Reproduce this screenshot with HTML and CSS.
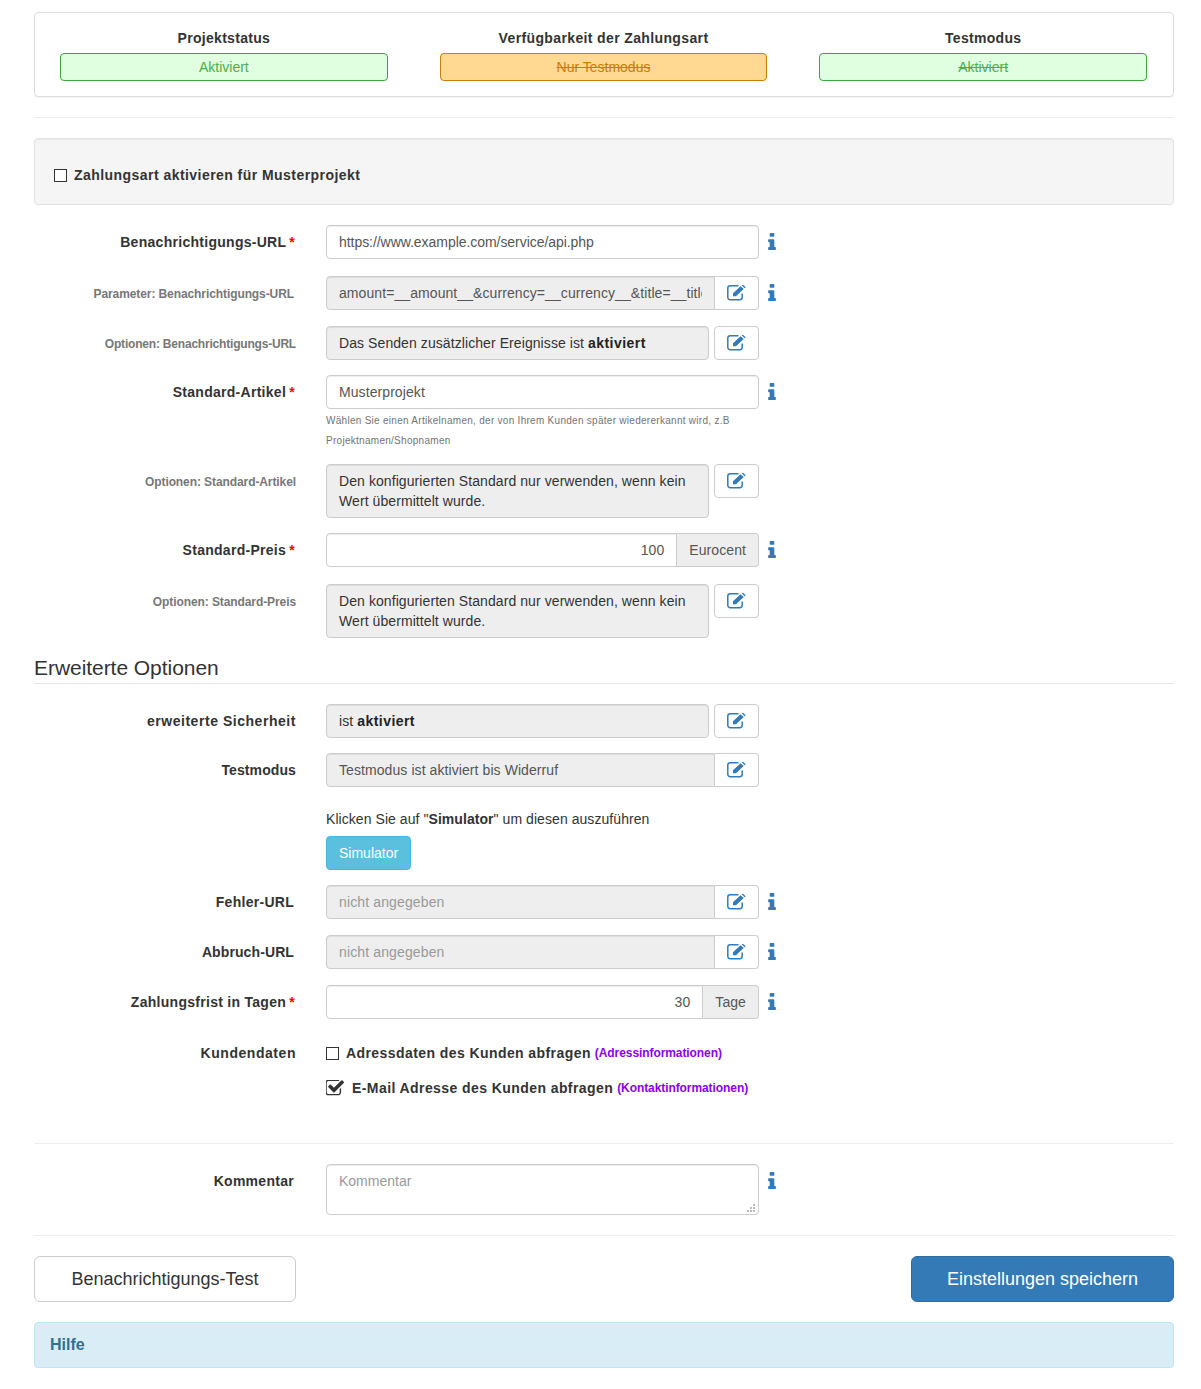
FILE: index.html
```html
<!DOCTYPE html>
<html lang="de">
<head>
<meta charset="utf-8">
<title>Zahlungsart</title>
<link rel="stylesheet" href="styles.css">
</head>
<body>
<svg class="defs" width="0" height="0" aria-hidden="true">
  <symbol id="i-edit" viewBox="0 0 20 16"><path class="edit-box" d="M11.500 .8H3.200A2.400 2.400 0 0 0 .8 3.200V12.300A2.400 2.400 0 0 0 3.200 14.700H12.800A2.400 2.400 0 0 0 15.200 12.300V8.500"/><path d="M6 8.300 13.600 1.200 16.700 4.100 9 11.300H6ZM14.600.3 15.200 0C15.700-.2 16.200 0 16.500.2L18.100 1.700C18.500 2.100 18.500 2.600 18.200 3L17.600 3.300Z"/></symbol>
  <symbol id="i-info" viewBox="576 128 640 1408"><path d="M1216 1344v128q0 26-19 45t-45 19h-512q-26 0-45-19t-19-45v-128q0-26 19-45t45-19h64v-384h-64q-26 0-45-19t-19-45v-128q0-26 19-45t45-19h384q26 0 45 19t19 45v576h64q26 0 45 19t19 45zm-128-1152v192q0 26-19 45t-45 19h-256q-26 0-45-19t-19-45v-192q0-26 19-45t45-19h256q26 0 45 19t19 45z"/></symbol>
  <symbol id="i-check" viewBox="128 230 1600 1306"><path d="M1472 930v318q0 119-84.500 203.500t-203.500 84.500h-832q-119 0-203.500-84.500t-84.500-203.500v-832q0-119 84.500-203.500t203.500-84.500h832q63 0 117 25 15 7 18 23 3 17-9 29l-49 49q-10 10-23 10-3 0-9-2-23-6-45-6h-832q-66 0-113 47t-47 113v832q0 66 47 113t113 47h832q66 0 113-47t47-113v-254q0-13 9-22l64-64q10-10 23-10 6 0 12 3 20 8 20 29zm231-489l-814 814q-24 24-57 24t-57-24l-430-430q-24-24-24-57t24-57l110-110q24-24 57-24t57 24l263 263 647-647q24-24 57-24t57 24l110 110q24 24 24 57t-24 57z"/></symbol>
</svg>

<main class="page">
  <section class="status-panel">
    <div class="status-col">
      <div class="status-title">Projektstatus</div>
      <div class="badge badge-green">Aktiviert</div>
    </div>
    <div class="status-col">
      <div class="status-title status-title-wide">Verfügbarkeit der Zahlungsart</div>
      <div class="badge badge-orange strike">Nur Testmodus</div>
    </div>
    <div class="status-col">
      <div class="status-title">Testmodus</div>
      <div class="badge badge-green strike">Aktiviert</div>
    </div>
  </section>

  <hr class="rule">

  <section class="well">
    <label class="check-label"><span class="box"></span>Zahlungsart aktivieren für Musterprojekt</label>
  </section>

  <div class="row gap-17">
    <div class="lbl lbl-star">Benachrichtigungs-URL <span class="req">*</span></div>
    <div class="ctl"><div class="field field-url">https://www.example.com/service/api.php</div></div>
    <svg class="info"><use href="#i-info"/></svg>
  </div>

  <div class="row gap-16">
    <div class="lbl lbl-small lbl-star">Parameter: Benachrichtigungs-URL</div>
    <div class="ctl ctl-joined">
      <input class="field field-off" type="text" readonly value="amount=__amount__&amp;currency=__currency__&amp;title=__title__">
      <button class="btn-edit" type="button"><svg class="edit"><use href="#i-edit"/></svg></button>
    </div>
    <svg class="info"><use href="#i-info"/></svg>
  </div>

  <div class="row gap-15">
    <div class="lbl lbl-small lbl-narrow">Optionen: Benachrichtigungs-URL</div>
    <div class="ctl ctl-split">
      <div class="field field-off field-dark">Das Senden zusätzlicher Ereignisse ist <b>aktiviert</b></div>
      <button class="btn-edit" type="button"><svg class="edit"><use href="#i-edit"/></svg></button>
    </div>
  </div>

  <div class="row gap-13">
    <div class="lbl lbl-star">Standard-Artikel <span class="req">*</span></div>
    <div class="ctl">
      <div class="field">Musterprojekt</div>
      <p class="hint">Wählen Sie einen Artikelnamen, der von Ihrem Kunden später wiedererkannt wird, z.B Projektnamen/Shopnamen</p>
    </div>
    <svg class="info"><use href="#i-info"/></svg>
  </div>

  <div class="row gap-15">
    <div class="lbl lbl-small">Optionen: Standard-Artikel</div>
    <div class="ctl ctl-split">
      <div class="field field-off field-dark field-multi">Den konfigurierten Standard nur verwenden, wenn kein Wert übermittelt wurde.</div>
      <button class="btn-edit" type="button"><svg class="edit"><use href="#i-edit"/></svg></button>
    </div>
  </div>

  <div class="row gap-17">
    <div class="lbl lbl-star">Standard-Preis <span class="req">*</span></div>
    <div class="ctl ctl-joined">
      <div class="field field-num">100</div>
      <div class="addon">Eurocent</div>
    </div>
    <svg class="info"><use href="#i-info"/></svg>
  </div>

  <div class="row">
    <div class="lbl lbl-small">Optionen: Standard-Preis</div>
    <div class="ctl ctl-split">
      <div class="field field-off field-dark field-multi">Den konfigurierten Standard nur verwenden, wenn kein Wert übermittelt wurde.</div>
      <button class="btn-edit" type="button"><svg class="edit"><use href="#i-edit"/></svg></button>
    </div>
  </div>

  <h2 class="legend">Erweiterte Optionen</h2>

  <div class="row gap-15">
    <div class="lbl lbl-wide">erweiterte Sicherheit</div>
    <div class="ctl ctl-split">
      <div class="field field-off field-dark">ist <b>aktiviert</b></div>
      <button class="btn-edit" type="button"><svg class="edit"><use href="#i-edit"/></svg></button>
    </div>
  </div>

  <div class="row">
    <div class="lbl lbl-tight">Testmodus</div>
    <div class="ctl ctl-joined">
      <div class="field field-off">Testmodus ist aktiviert bis Widerruf</div>
      <button class="btn-edit" type="button"><svg class="edit"><use href="#i-edit"/></svg></button>
    </div>
  </div>

  <div class="row gap-15">
    <div class="lbl"></div>
    <div class="ctl">
      <p class="sim-text">Klicken Sie auf "<b>Simulator</b>" um diesen auszuführen</p>
      <button class="btn-sim" type="button">Simulator</button>
    </div>
  </div>

  <div class="row gap-16">
    <div class="lbl lbl-star">Fehler-URL</div>
    <div class="ctl ctl-joined">
      <div class="field field-off field-muted">nicht angegeben</div>
      <button class="btn-edit" type="button"><svg class="edit"><use href="#i-edit"/></svg></button>
    </div>
    <svg class="info"><use href="#i-info"/></svg>
  </div>

  <div class="row gap-16">
    <div class="lbl lbl-star lbl-tight">Abbruch-URL</div>
    <div class="ctl ctl-joined">
      <div class="field field-off field-muted">nicht angegeben</div>
      <button class="btn-edit" type="button"><svg class="edit"><use href="#i-edit"/></svg></button>
    </div>
    <svg class="info"><use href="#i-info"/></svg>
  </div>

  <div class="row gap-15">
    <div class="lbl lbl-star">Zahlungsfrist in Tagen <span class="req">*</span></div>
    <div class="ctl ctl-joined">
      <div class="field field-num">30</div>
      <div class="addon">Tage</div>
    </div>
    <svg class="info"><use href="#i-info"/></svg>
  </div>

  <div class="row kunden-row">
    <div class="lbl lbl-wide">Kundendaten</div>
    <div class="ctl ctl-wide">
      <div class="check-row"><span class="box"></span><span class="check-text">Adressdaten des Kunden abfragen</span> <span class="tag">(Adressinformationen)</span></div>
      <div class="check-row check-row-on"><svg class="checked"><use href="#i-check"/></svg><span class="check-text">E-Mail Adresse des Kunden abfragen</span> <span class="tag">(Kontaktinformationen)</span></div>
    </div>
  </div>

  <hr class="rule">

  <div class="row comment-row">
    <div class="lbl lbl-star">Kommentar</div>
    <div class="ctl ctl-area"><textarea class="area" placeholder="Kommentar"></textarea><span class="grip"></span></div>
    <svg class="info"><use href="#i-info"/></svg>
  </div>

  <hr class="rule">

  <div class="actions">
    <button class="btn-big btn-plain" type="button">Benachrichtigungs-Test</button>
    <button class="btn-big btn-primary" type="button">Einstellungen speichern</button>
  </div>

  <section class="help">Hilfe</section>
</main>
</body>
</html>
```

FILE: styles.css
```css
* { box-sizing: border-box; }
html, body { margin: 0; padding: 0; background: #fff; }
body {
  font-family: "Liberation Sans", Arial, sans-serif;
  font-size: 14px;
  line-height: 20px;
  color: #333;
}
.defs { position: absolute; }
.page { width: 1140px; margin-left: 34px; padding-top: 12px; }

.status-panel {
  display: flex;
  gap: 52px;
  height: 85px;
  padding: 15px 26px 0 25px;
  border: 1px solid #ddd;
  border-radius: 4px;
  box-shadow: 0 1px 1px rgba(0,0,0,.05);
}
.status-col { flex: 1; text-align: center; }
.status-title { font-weight: 700; letter-spacing: .3px; height: 25px; }
.status-title-wide { letter-spacing: .37px; }
.badge {
  height: 28px;
  line-height: 26px;
  border: 1px solid;
  border-radius: 4px;
}
.badge-green { background: #e0ffe0; border-color: #3fa33f; color: #4cae4c; }
.badge-orange { background: #ffd991; border-color: #c67f00; color: #c67f00; }
.strike { text-decoration: line-through; }

.rule { height: 1px; margin: 20px 0; border: 0; background: #eee; }

.well {
  display: flex;
  align-items: center;
  height: 67px;
  padding: 7px 19px 0;
  margin-bottom: 20px;
  background: #f5f5f5;
  border: 1px solid #e3e3e3;
  border-radius: 4px;
  box-shadow: inset 0 1px 1px rgba(0,0,0,.05);
}
.check-label { display: flex; align-items: center; font-weight: 700; letter-spacing: .45px; }
.box {
  flex: none;
  width: 13px;
  height: 13px;
  margin-right: 7px;
  background: #fff;
  border: 1px solid #333;
}

.row { display: flex; align-items: flex-start; margin-bottom: 15px; }
.gap-13 { margin-bottom: 13px; }
.gap-15 { margin-bottom: 15px; }
.gap-16 { margin-bottom: 16px; }
.gap-17 { margin-bottom: 17px; }

.lbl {
  flex: none;
  width: 262px;
  margin-right: 30px;
  padding-top: 7px;
  text-align: right;
  font-weight: 700;
  letter-spacing: .28px;
}
.lbl-star { padding-right: 2px; }
.lbl-wide { letter-spacing: .54px; }
.lbl-tight { letter-spacing: .1px; }
.lbl-small { padding-top: 8px; font-size: 12px; color: #777; letter-spacing: -.09px; }
.lbl-narrow { letter-spacing: -.2px; }
.req { margin: 0 -1px; color: #f00; }

.ctl { flex: none; width: 433px; }
.ctl-joined, .ctl-split { display: flex; align-items: flex-start; }
.ctl-split { gap: 5px; }
.ctl-wide { width: 560px; }
.ctl-area { position: relative; }

.field {
  flex: 1;
  width: 100%;
  min-width: 0;
  min-height: 34px;
  padding: 6px 12px;
  font: inherit;
  letter-spacing: .08px;
  color: #555;
  background: #fff;
  border: 1px solid #ccc;
  border-radius: 4px;
  box-shadow: inset 0 1px 1px rgba(0,0,0,.075);
}
.field-url { letter-spacing: -.05px; }
.field-off { background: #eee; }
.field-dark { color: #333; }
.field-muted { color: #999; letter-spacing: .13px; }
.field-multi { min-height: 54px; }
.field-num { text-align: right; }
.field b { color: #222; letter-spacing: .45px; }

.ctl-joined .field { border-radius: 4px 0 0 4px; }

.btn-edit {
  display: flex;
  align-items: center;
  justify-content: center;
  flex: none;
  width: 45px;
  height: 34px;
  padding: 0;
  background: #fff;
  border: 1px solid #ccc;
  border-radius: 4px;
}
.ctl-joined .btn-edit { width: 44px; border-left: 0; border-radius: 0 4px 4px 0; }
.edit { width: 20px; height: 16px; fill: #337ab7; }
.edit-box { fill: none; stroke: #337ab7; stroke-width: 1.5; }

.addon {
  flex: none;
  height: 34px;
  padding: 6px 12px;
  letter-spacing: .08px;
  color: #555;
  background: #eee;
  border: 1px solid #ccc;
  border-left: 0;
  border-radius: 0 4px 4px 0;
}

.info { flex: none; width: 8px; height: 17px; margin: 8px 0 0 9px; fill: #337ab7; }

.hint {
  margin: 2px 0 0;
  font-size: 10px;
  line-height: 20px;
  color: #737373;
  letter-spacing: .28px;
}

.legend {
  height: 31px;
  margin: 0 0 20px;
  padding-top: 2px;
  font-size: 21px;
  font-weight: 400;
  line-height: 25px;
  letter-spacing: -.05px;
  color: #333;
  border-bottom: 1px solid #e5e5e5;
}

.sim-text { margin: 7px 0; letter-spacing: .06px; }
.btn-sim {
  display: block;
  height: 34px;
  padding: 0 12px;
  font: inherit;
  color: #fff;
  background: #5bc0de;
  border: 1px solid #46b8da;
  border-radius: 4px;
}

.kunden-row { height: 89px; margin-bottom: 0; padding-top: 2px; }
.check-row { display: flex; align-items: center; height: 20px; margin: 7px 0 15px; font-weight: 700; }
.check-row-on { margin-top: 15px; }
.check-text { letter-spacing: .42px; margin-right: 4px; }
.check-row .box { margin-right: 7px; }
.checked { flex: none; width: 18px; height: 16px; margin-right: 8px; fill: #333; }
.tag { font-size: 12px; letter-spacing: -.08px; color: #8a00f0; }

.comment-row { margin-bottom: 0; }
.area {
  display: block;
  width: 433px;
  height: 51px;
  padding: 6px 12px;
  font: inherit;
  color: #555;
  border: 1px solid #ccc;
  border-radius: 4px;
  box-shadow: inset 0 1px 1px rgba(0,0,0,.075);
  resize: none;
}
.area::placeholder { color: #999; opacity: 1; }
.grip {
  position: absolute;
  right: 4px;
  bottom: 3px;
  width: 2px;
  height: 2px;
  background: #bbb;
  box-shadow: -3px 0 #bbb, -6px 0 #bbb, 0 -3px #bbb, -3px -3px #bbb, 0 -6px #bbb;
}

.actions { display: flex; justify-content: space-between; margin-bottom: 20px; }
.btn-big {
  height: 46px;
  padding: 0;
  font: inherit;
  font-size: 18px;
  border: 1px solid;
  border-radius: 6px;
}
.btn-plain { width: 262px; color: #333; background: #fff; border-color: #ccc; }
.btn-primary { width: 263px; color: #fff; background: #337ab7; border-color: #2e6da4; }

.help {
  height: 46px;
  padding: 11px 15px;
  font-size: 16px;
  font-weight: 700;
  line-height: 22px;
  color: #31708f;
  background: #d9edf7;
  border: 1px solid #bce8f1;
  border-radius: 4px;
  box-shadow: 0 1px 1px rgba(0,0,0,.05);
}
```
